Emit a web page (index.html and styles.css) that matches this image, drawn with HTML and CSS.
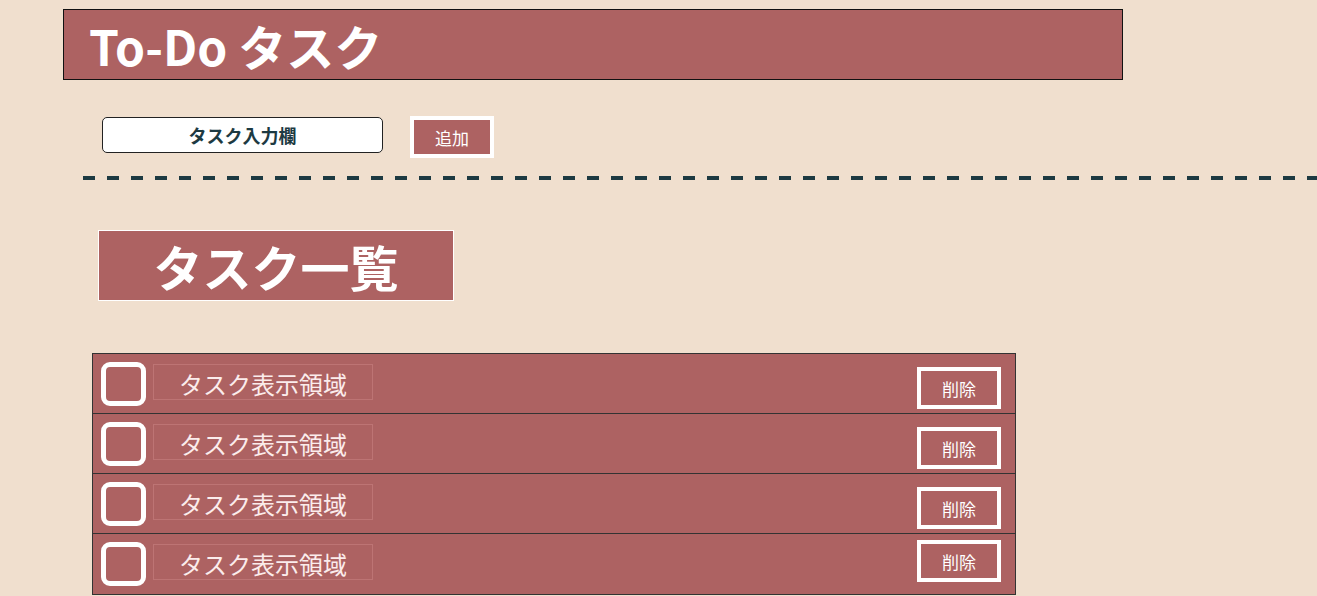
FILE: index.html
```html
<!DOCTYPE html>
<html lang="ja">
<head>
<meta charset="utf-8">
<title>To-Do タスク</title>
<link rel="stylesheet" href="styles.css">
</head>
<body>
  <header class="title-bar"><h1 class="title">To-Do タスク</h1></header>
  <div class="form-row">
    <div class="task-input">タスク入力欄</div>
    <button class="add-btn">追加</button>
  </div>
  <div class="divider"></div>
  <h2 class="list-heading">タスク一覧</h2>
  <ul class="task-list">
    <li class="task-row"><span class="check"></span><span class="task-text">タスク表示領域</span><button class="del-btn">削除</button></li>
    <li class="task-row"><span class="check"></span><span class="task-text">タスク表示領域</span><button class="del-btn">削除</button></li>
    <li class="task-row"><span class="check"></span><span class="task-text">タスク表示領域</span><button class="del-btn">削除</button></li>
    <li class="task-row task-row-last"><span class="check"></span><span class="task-text">タスク表示領域</span><button class="del-btn">削除</button></li>
  </ul>
</body>
</html>
```
FILE: styles.css
```css
html, body {
  margin: 0;
  padding: 0;
  background: #f0dfce;
  overflow: hidden;
}
body {
  padding-top: 9px;
  font-family: "Noto Sans CJK JP", "Noto Sans", sans-serif;
}
.title-bar {
  margin-left: 63px;
  width: 1033px;
  height: 69px;
  border: 1px solid #111;
  background: #ad6262;
  display: flex;
  align-items: center;
  padding-left: 25px;
  box-sizing: content-box;
}
.title {
  margin: 0;
  color: #fff;
  font-size: 48px;
  font-weight: 700;
  line-height: 1;
}
.form-row {
  margin-top: 36px;
  padding-left: 102px;
  display: flex;
  align-items: flex-start;
}
.task-input {
  margin-top: 1px;
  width: 281px;
  height: 36px;
  box-sizing: border-box;
  border: 1px solid #222;
  border-radius: 5px;
  background: #fff;
  color: #1d3a42;
  font-size: 18px;
  font-weight: 700;
  display: flex;
  align-items: center;
  justify-content: center;
}
.add-btn {
  margin-left: 27px;
  width: 84px;
  height: 42px;
  box-sizing: border-box;
  border: 4px solid #fff;
  background: #ad6262;
  color: #fff;
  font-family: inherit;
  font-size: 17px;
  padding: 0;
}
.divider {
  margin: 18px 0 0 83px;
  width: 1234px;
  height: 4px;
  background: repeating-linear-gradient(to right, #1d3a42 0 12px, transparent 12px 24px);
}
.list-heading {
  margin: 50px 0 0 98px;
  width: 356px;
  height: 71px;
  box-sizing: border-box;
  border: 1px solid #fff;
  background: #ad6262;
  color: #fff;
  font-size: 49px;
  font-weight: 700;
  display: flex;
  align-items: center;
  justify-content: center;
  line-height: 1;
}
.task-list {
  list-style: none;
  margin: 52px 0 0 92px;
  padding: 0;
  width: 924px;
  box-sizing: border-box;
  border: 1px solid #333;
  background: #ad6262;
}
.task-row {
  height: 59px;
  border-bottom: 1px solid #333;
  display: flex;
  align-items: flex-start;
  padding: 0 14px 0 8px;
}
.task-row-last {
  height: 60px;
  border-bottom: 0;
}
.check {
  margin-top: 8px;
  width: 45px;
  height: 44px;
  box-sizing: border-box;
  border: 5px solid #fff;
  border-radius: 9px;
}
.task-text {
  margin: 10px 0 0 7px;
  padding-top: 3px;
  width: 220px;
  height: 36px;
  box-sizing: border-box;
  border: 1px solid #bd7474;
  color: #fbecec;
  font-size: 24px;
  display: flex;
  align-items: center;
  justify-content: center;
  line-height: 1;
}
.del-btn {
  margin: 13px 0 0 auto;
  width: 84px;
  height: 42px;
  box-sizing: border-box;
  border: 4px solid #fff;
  background: #ad6262;
  color: #fff;
  font-family: inherit;
  font-size: 17px;
  padding: 0;
}
.task-row-last .del-btn {
  margin-top: 6px;
}
```
